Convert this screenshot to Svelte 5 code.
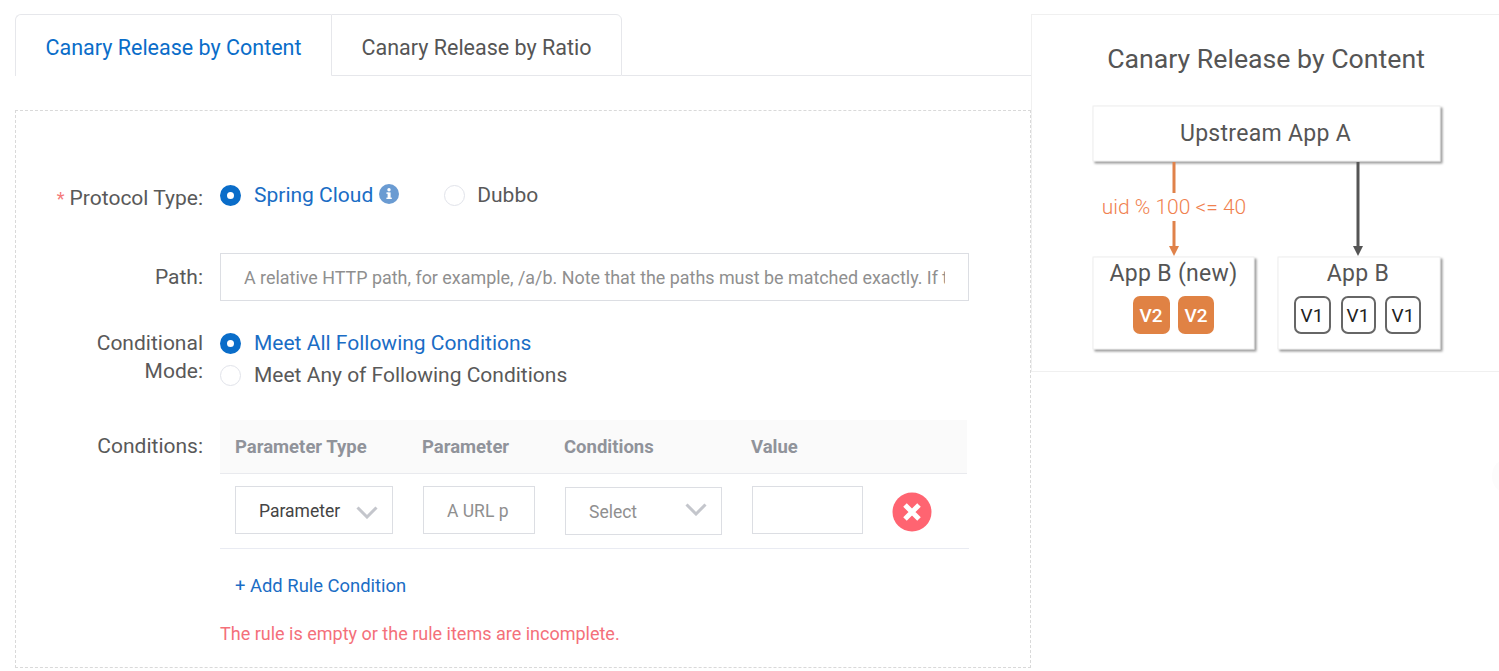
<script>
  let protocol = $state('spring');
  let mode = $state('all');
</script>

<div class="page">
  <main class="left">
    <div class="tabs">
      <button class="tab active">Canary Release by Content</button>
      <button class="tab second">Canary Release by Ratio</button>
      <div class="tab-rest"></div>
    </div>

    <section class="panel">
      <div class="row protocol">
        <div class="label"><span class="req">*</span> Protocol Type:</div>
        <div class="radios-inline">
          <button class="radio on" onclick={() => (protocol = 'spring')}>
            <span class="dot"></span>
            <span class="rt blue">Spring Cloud</span>
            <svg class="info" width="20" height="20" viewBox="0 0 20 20"><circle cx="10" cy="10" r="10" fill="#6a9bd2"/><rect x="8.6" y="8.4" width="3" height="6.2" fill="#fff"/><rect x="7.4" y="8.4" width="2" height="1.4" fill="#fff"/><rect x="7.4" y="13.6" width="5.4" height="1.4" fill="#fff"/><circle cx="10" cy="5.8" r="1.7" fill="#fff"/></svg>
          </button>
          <button class="radio dubbo" onclick={() => (protocol = 'dubbo')}>
            <span class="dot"></span>
            <span class="rt">Dubbo</span>
          </button>
        </div>
      </div>

      <div class="row path">
        <div class="label">Path:</div>
        <input class="path-input" placeholder="A relative HTTP path, for example, /a/b. Note that the paths must be matched exactly. If the path is empty" />
      </div>

      <div class="row mode">
        <div class="label two">Conditional Mode:</div>
        <div class="radios-stack">
          <button class="radio on" onclick={() => (mode = 'all')}>
            <span class="dot"></span>
            <span class="rt blue">Meet All Following Conditions</span>
          </button>
          <button class="radio" onclick={() => (mode = 'any')}>
            <span class="dot"></span>
            <span class="rt">Meet Any of Following Conditions</span>
          </button>
        </div>
      </div>

      <div class="row conditions">
        <div class="label">Conditions:</div>
        <div class="cond-body">
          <div class="thead">
            <span>Parameter Type</span>
            <span class="shift">Parameter</span>
            <span class="shift">Conditions</span>
            <span class="shift">Value</span>
          </div>
          <div class="tbody">
            <div class="field sel dark">
              <span>Parameter</span>
              <svg class="chev" width="22" height="13" viewBox="0 0 22 13"><path d="M1.5 1.5 11 11 20.5 1.5" fill="none" stroke="#c4c6cc" stroke-width="3"/></svg>
            </div>
            <div class="field grey">A URL p</div>
            <div class="field sel grey low">
              <span>Select</span>
              <svg class="chev up" width="22" height="13" viewBox="0 0 22 13"><path d="M1.5 1.5 11 11 20.5 1.5" fill="none" stroke="#c4c6cc" stroke-width="3"/></svg>
            </div>
            <div class="field"></div>
            <svg class="del" width="40" height="40" viewBox="0 0 40 40"><circle cx="20" cy="20" r="19.5" fill="#ff6471"/><path d="M13 13 27 27M27 13 13 27" stroke="#fff" stroke-width="5"/></svg>
          </div>
          <div class="add">+ Add Rule Condition</div>
          <div class="error">The rule is empty or the rule items are incomplete.</div>
        </div>
      </div>
    </section>
  </main>

  <aside class="right">
    <svg class="diagram" width="468" height="356" viewBox="1032 15 468 356">
      <defs>
        <filter id="sh" x="-5%" y="-5%" width="112%" height="120%">
          <feDropShadow dx="2" dy="2" stdDeviation="1.2" flood-color="#777" flood-opacity="0.75"/>
        </filter>
      </defs>
      <text x="1266" y="68" class="t title">Canary Release by Content</text>
      <rect x="1093" y="106" width="347" height="55" fill="#fff" stroke="#eee" filter="url(#sh)"/>
      <text x="1265.5" y="141" class="t big">Upstream App A</text>

      <path d="M1174 162V193M1174 221V248" stroke="#e0824a" stroke-width="3"/>
      <path d="M1169 246h10l-5 10z" fill="#e0824a"/>
      <text x="1174" y="214" class="t cond">uid % 100 &lt;= 40</text>

      <path d="M1358 162V248" stroke="#555" stroke-width="3"/>
      <path d="M1353 246h10l-5 10z" fill="#555"/>

      <rect x="1093" y="257" width="161" height="92" fill="#fff" stroke="#eee" filter="url(#sh)"/>
      <rect x="1278" y="257" width="162" height="92" fill="#fff" stroke="#eee" filter="url(#sh)"/>
      <text x="1173.5" y="281" class="t big">App B (new)</text>
      <text x="1358" y="281" class="t big">App B</text>

      <rect x="1133" y="296" width="37" height="38" rx="7" fill="#e08244"/>
      <rect x="1178" y="296" width="36" height="38" rx="7" fill="#e08244"/>
      <text x="1151" y="322" class="t v w">V2</text>
      <text x="1196" y="322" class="t v w">V2</text>

      <rect x="1295" y="297" width="35" height="36" rx="6" fill="#fff" stroke="#666" stroke-width="2"/>
      <rect x="1342" y="297" width="33" height="36" rx="6" fill="#fff" stroke="#666" stroke-width="2"/>
      <rect x="1386" y="297" width="34" height="36" rx="6" fill="#fff" stroke="#666" stroke-width="2"/>
      <text x="1312" y="322" class="t v k">V1</text>
      <text x="1358" y="322" class="t v k">V1</text>
      <text x="1403" y="322" class="t v k">V1</text>
    </svg>
    <div class="edge-handle"></div>
  </aside>
</div>

<style>
  :global(body) {
    margin: 0;
    background: #fff;
    font-family: Roboto, "Noto Sans", sans-serif;
  }
  .page {
    display: flex;
    width: 1499px;
    height: 671px;
    overflow: hidden;
    color: #595959;
  }
  .left {
    width: 1031px;
    flex: none;
    box-sizing: border-box;
    padding: 14px 0 0 15px;
  }
  .tabs { display: flex; height: 62px; }
  .tab {
    font: inherit;
    font-size: 21.5px;
    background: #fff;
    color: #555;
    border: 1px solid #e6e7eb;
    padding: 4px 0 0;
    box-sizing: border-box;
    height: 62px;
  }
  .tab.active {
    width: 316px;
    color: #0a6dc9;
    border-right: none;
    border-bottom: none;
    border-top-left-radius: 6px;
    background: #fff;
  }
  .tab.second {
    width: 291px;
    border-top-right-radius: 6px;
  }
  .tab-rest { flex: 1; border-bottom: 1px solid #e6e7eb; }

  .panel {
    margin-top: 34px;
    height: 558px;
    box-sizing: border-box;
    border: 1px dashed #d9d9d9;
    padding-top: 68px;
  }
  .row { display: flex; gap: 17px; }
  .label {
    width: 187px;
    flex: none;
    box-sizing: border-box;
    text-align: right;
    font-size: 21px;
    line-height: 28px;
  }
  .req { color: #f47a7a; font-size: 18px; }
  .radio {
    display: flex;
    align-items: center;
    background: none;
    border: none;
    padding: 0;
    font: inherit;
    font-size: 21px;
    color: #595959;
    height: 32px;
  }
  .dot {
    width: 21px;
    height: 21px;
    box-sizing: border-box;
    border-radius: 50%;
    border: 1px solid #e1e3ea;
    margin-right: 13px;
    flex: none;
  }
  .on .dot { border: 7px solid #0a6dc9; background: #fff; }
  .rt.blue { color: #1a6dc5; }
  .info { margin-left: 6px; margin-top: -3px; }

  .protocol { height: 56px; padding-top: 5px; box-sizing: border-box; }
  .radios-inline { display: flex; margin-top: -5px; }
  .dubbo { margin-left: 45px; }
  .dubbo .dot { margin-right: 12px; }

  .path { margin-top: 18px; height: 48px; align-items: center; }
  .path-input {
    width: 749px;
    height: 48px;
    box-sizing: border-box;
    border: 1px solid #dcdee3;
    padding: 0 23px;
    font: inherit;
    font-size: 17.9px;
    outline: none;
  }
  .path-input::placeholder { color: #8f8f8f; opacity: 1; }

  .mode { margin-top: 26px; }
  .label.two { line-height: 28px; padding-left: 60px; }
  .radios-stack { display: flex; flex-direction: column; }
  .mode .label { margin-top: 2px; }

  .conditions { margin-top: 29px; }
  .conditions .label { margin-top: 12px; }
  .cond-body { width: 749px; }
  .thead {
    display: grid;
    grid-template-columns: 158px 112px 157px 111px 40px;
    column-gap: 30px;
    box-sizing: border-box;
    width: 747px;
    height: 54px;
    padding: 0 15px;
    align-items: center;
    background: #fafafa;
    border-bottom: 1px solid #e9eaee;
    color: #90939a;
    font-weight: 700;
    font-size: 18.5px;
  }
  .shift { margin-left: -1px; }
  .tbody {
    display: grid;
    grid-template-columns: 158px 112px 157px 111px 40px;
    column-gap: 30px;
    box-sizing: border-box;
    height: 75px;
    padding: 12px 15px 0;
    border-bottom: 1px solid #e9ebf2;
  }
  .field {
    height: 48px;
    box-sizing: border-box;
    border: 1px solid #dcdee3;
    padding: 1px 0 0 23px;
    display: flex;
    align-items: center;
    font-size: 17.5px;
    white-space: nowrap;
    overflow: hidden;
  }
  .sel { justify-content: space-between; padding-right: 14px; }
  .dark { color: #444; }
  .grey { color: #8f8f8f; }
  .low { margin-top: 1px; }
  .chev { margin-top: 3px; flex: none; }
  .chev.up { margin-top: -4px; }
  .del { margin: 6px 0 0 -1px; }
  .add {
    margin: 25px 0 0 15px;
    font-size: 18.4px;
    line-height: 24px;
    color: #1a6dc5;
  }
  .error {
    margin-top: 24px;
    font-size: 18px;
    line-height: 24px;
    color: #f4707a;
  }

  .right {
    position: relative;
    flex: 1;
    box-sizing: border-box;
    margin-top: 14px;
    height: 358px;
    border-top: 1px solid #f0f0f0;
    border-left: 1px solid #f0f0f0;
    border-bottom: 1px solid #f0f0f0;
  }
  .diagram { display: block; }
  .t { font-family: Roboto, "Noto Sans", sans-serif; text-anchor: middle; fill: #555; }
  .title { font-size: 26.7px; }
  .big { font-size: 23px; letter-spacing: 0.3px; }
  .cond { font-size: 21px; fill: #f0814f; font-weight: 300; }
  .v { font-size: 19px; }
  .w { fill: #fff; font-weight: 500; }
  .k { fill: #222; }
  .edge-handle {
    position: absolute;
    top: 446px;
    right: -12px;
    width: 20px;
    height: 30px;
    border-radius: 50%;
    background: #fcfcfc;
  }
</style>
